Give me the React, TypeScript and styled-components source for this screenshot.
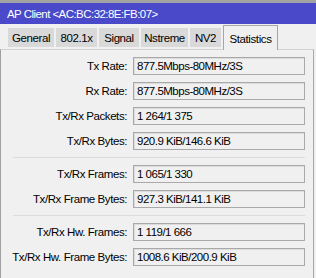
import React from "react";
import styled, { createGlobalStyle } from "styled-components";

const Global = createGlobalStyle`
  html, body { margin: 0; padding: 0; background: #f0f0f0; }
  body { font-family: "Liberation Sans", Arial, sans-serif; font-size: 11.5px; color: #000; }
`;

const Window = styled.div`
  width: 316px;
  height: 278px;
  overflow: hidden;
  background: #f0f0f0;
`;

const TitleBar = styled.div`
  height: 21px;
  border-top: 3px solid #a3a3a3;
  background: #4949c9;
  color: #fff;
  padding-left: 7px;
  display: flex;
  align-items: center;
  font-size: 11.5px;
  letter-spacing: -0.55px;
`;

const TabBar = styled.div`
  display: flex;
  align-items: flex-end;
  gap: 2px;
  height: 25px;
  padding-left: 8px;
`;

const Tab = styled.div<{ $w: number; $active?: boolean }>`
  width: ${(p) => p.$w}px;
  box-sizing: border-box;
  display: flex;
  justify-content: center;
  align-items: center;
  letter-spacing: -0.4px;
  height: ${(p) => (p.$active ? 25 : 19)}px;
  margin-bottom: ${(p) => (p.$active ? -1 : 2)}px;
  background: ${(p) => (p.$active ? "#f0f0f0" : "#d9d9d9")};
  border: ${(p) => (p.$active ? "1px solid #a6a6a6" : "none")};
  border-bottom: none;
  padding-top: 1px;
  position: relative;
  z-index: ${(p) => (p.$active ? 1 : 0)};
`;

const Panel = styled.div`
  width: 314px;
  box-sizing: border-box;
  border-top: 1px solid #d2d2d2;
  border-left: 1px solid #a0a0a0;
  border-right: 1px solid #a8a8a8;
  padding: 7px 8px 0 0;
  height: 240px;
`;

const Row = styled.div`
  display: grid;
  grid-template-columns: 126px 172px;
  column-gap: 6px;
  align-items: center;
  margin-bottom: 7px;
`;

const Label = styled.div`
  text-align: right;
  letter-spacing: -0.42px;
  white-space: nowrap;
`;

const Field = styled.div`
  height: 18px;
  box-sizing: border-box;
  border: 1px solid #a9a9a9;
  box-shadow: inset 1px 1px 0 #dcdcdc;
  background: #f0f0f0;
  padding-left: 3px;
  display: flex;
  align-items: center;
  letter-spacing: -0.5px;
  white-space: nowrap;
`;

const Separator = styled.div`
  height: 1px;
  background: #dcdcdc;
  margin: 2px 0 7px 12px;
`;

const groups: [string, string][][] = [
  [
    ["Tx Rate:", "877.5Mbps-80MHz/3S"],
    ["Rx Rate:", "877.5Mbps-80MHz/3S"],
    ["Tx/Rx Packets:", "1 264/1 375"],
    ["Tx/Rx Bytes:", "920.9 KiB/146.6 KiB"],
  ],
  [
    ["Tx/Rx Frames:", "1 065/1 330"],
    ["Tx/Rx Frame Bytes:", "927.3 KiB/141.1 KiB"],
  ],
  [
    ["Tx/Rx Hw. Frames:", "1 119/1 666"],
    ["Tx/Rx Hw. Frame Bytes:", "1008.6 KiB/200.9 KiB"],
  ],
];

const tabs: [string, number][] = [
  ["General", 46],
  ["802.1x", 41],
  ["Signal", 40],
  ["Nstreme", 47],
  ["NV2", 31],
  ["Statistics", 55],
];

export default function App() {
  return (
    <Window>
      <Global />
      <TitleBar>AP Client &lt;AC:BC:32:8E:FB:07&gt;</TitleBar>
      <TabBar>
        {tabs.map(([t, w]) => (
          <Tab key={t} $w={w} $active={t === "Statistics"}>
            {t}
          </Tab>
        ))}
      </TabBar>
      <Panel>
        {groups.map((g, gi) => (
          <React.Fragment key={gi}>
            {gi > 0 && <Separator />}
            {g.map(([l, v]) => (
              <Row key={l}>
                <Label>{l}</Label>
                <Field>{v}</Field>
              </Row>
            ))}
          </React.Fragment>
        ))}
      </Panel>
    </Window>
  );
}
